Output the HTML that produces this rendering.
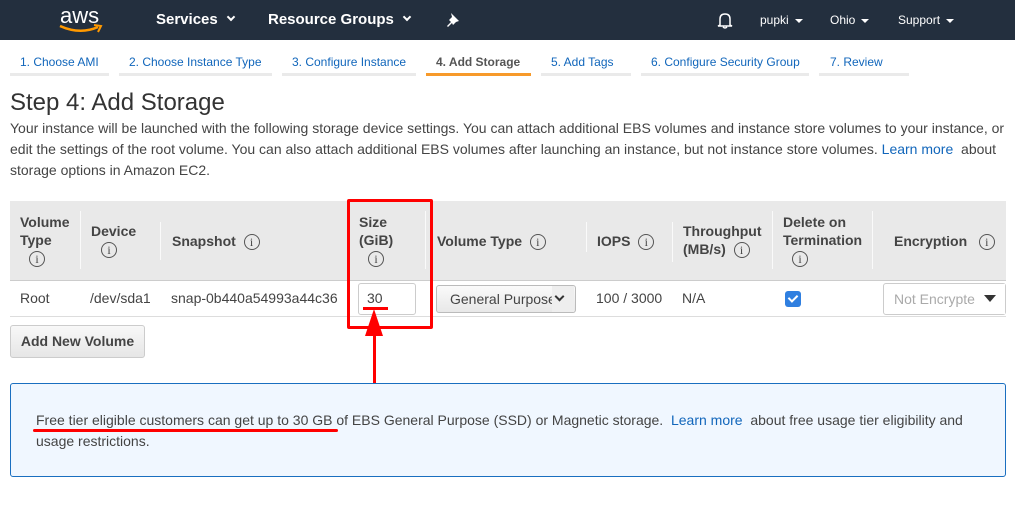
<!DOCTYPE html>
<html><head><meta charset="utf-8"><style>
*{margin:0;padding:0;box-sizing:border-box}
body{width:1015px;height:519px;overflow:hidden;background:#fff;font-family:"Liberation Sans",Arial,sans-serif;color:#444;position:relative}
.a{position:absolute;white-space:nowrap}
.nav{left:0;top:0;width:1015px;height:40px;background:#232f3e}
.nt{color:#fff;font-weight:bold;font-size:15px;top:11px}
.ns{color:#fff;font-size:12px;top:13px}
.car{display:inline-block;width:0;height:0;border-left:4px solid transparent;border-right:4px solid transparent;border-top:4px solid #fff;vertical-align:middle;margin-left:6px}
.chev{display:inline-block;width:6px;height:6px;border-right:2px solid #fff;border-bottom:2px solid #fff;transform:rotate(45deg);margin-left:10px;vertical-align:4px}
.st{font-size:12px;color:#1166bb;top:55px}
.bar{top:73px;height:3px;background:#eaeaea}
.h{font-weight:bold;font-size:14px;color:#444;line-height:18px}
.i{display:inline-block;width:16px;height:16px;border:1px solid #555;border-radius:50%;font-size:12px;line-height:14px;text-align:center;font-weight:normal;color:#444;vertical-align:middle;font-family:"Liberation Serif",serif}
.sep{top:211px;width:1px;height:58px;background:#fafafa}
.c{font-size:14px;top:290px;color:#444}
.lk{color:#1166bb}
</style></head><body>
<div class="a nav"></div>
<div class="a" style="left:60px;top:3px;color:#fff;font-size:22px">aws</div>
<svg class="a" style="left:58px;top:24px" width="46" height="10"><path d="M2 2 Q22 11 40 3" stroke="#f90" stroke-width="2.5" fill="none"/><path d="M36 1 L43 2 L40 8" stroke="#f90" stroke-width="2" fill="none"/></svg>
<div class="a nt" style="left:156px">Services<span class="chev"></span></div>
<div class="a nt" style="left:268px">Resource Groups<span class="chev"></span></div>
<svg class="a" style="left:445px;top:12px" width="16" height="16"><path d="M6 1 L14 9 L11 10 L8 13 L7 11 L3 15 L2 14 L6 10 L4 8 L7 5 Z" fill="#fff"/></svg>
<svg class="a" style="left:716px;top:11px" width="18" height="18"><path d="M4 14 L4 8 Q4 3 9 3 Q14 3 14 8 L14 14 L16 15 L2 15 Z M7 16 Q9 18 11 16" stroke="#fff" stroke-width="1.5" fill="none"/></svg>
<div class="a ns" style="left:760px">pupki<span class="car"></span></div>
<div class="a ns" style="left:830px">Ohio<span class="car"></span></div>
<div class="a ns" style="left:898px">Support<span class="car"></span></div>

<div class="a st" style="left:20px">1. Choose AMI</div><div class="a bar" style="left:10px;width:99px"></div>
<div class="a st" style="left:129px">2. Choose Instance Type</div><div class="a bar" style="left:119px;width:153px"></div>
<div class="a st" style="left:292px">3. Configure Instance</div><div class="a bar" style="left:282px;width:134px"></div>
<div class="a st" style="left:436px;color:#555;font-weight:bold">4. Add Storage</div><div class="a bar" style="left:426px;width:105px;background:#f79a2a"></div>
<div class="a st" style="left:551px">5. Add Tags</div><div class="a bar" style="left:541px;width:90px"></div>
<div class="a st" style="left:651px">6. Configure Security Group</div><div class="a bar" style="left:641px;width:168px"></div>
<div class="a st" style="left:830px">7. Review</div><div class="a bar" style="left:819px;width:90px"></div>

<div class="a" style="left:10px;top:89px;font-size:24px;color:#333">Step 4: Add Storage</div>
<div class="a" style="left:10px;top:118px;font-size:14px;line-height:21px;color:#444;white-space:normal;width:1000px">Your instance will be launched with the following storage device settings. You can attach additional EBS volumes and instance store volumes to your instance, or edit the settings of the root volume. You can also attach additional EBS volumes after launching an instance, but not instance store volumes. <span class="lk">Learn more</span>&nbsp; about storage options in Amazon EC2.</div>

<div class="a" style="left:10px;top:201px;width:996px;height:80px;background:#e9e9e9;border-bottom:1px solid #ccc"></div>
<div class="a" style="left:10px;top:316px;width:996px;height:1px;background:#ddd"></div>
<div class="a h" style="left:20px;top:213px">Volume<br>Type<br><span class="i" style="margin-left:9px">i</span></div>
<div class="a sep" style="left:80px"></div>
<div class="a h" style="left:91px;top:222px">Device<br><span class="i" style="margin-left:10px">i</span></div>
<div class="a sep" style="left:160px;top:222px;height:38px"></div>
<div class="a h" style="left:172px;top:232px">Snapshot &nbsp;<span class="i">i</span></div>
<div class="a h" style="left:359px;top:213px">Size<br>(GiB)<br><span class="i" style="margin-left:9px">i</span></div>
<div class="a sep" style="left:425px"></div>
<div class="a h" style="left:437px;top:232px">Volume Type &nbsp;<span class="i">i</span></div>
<div class="a sep" style="left:586px;top:222px;height:30px"></div>
<div class="a h" style="left:597px;top:232px">IOPS &nbsp;<span class="i">i</span></div>
<div class="a sep" style="left:672px;top:222px;height:40px"></div>
<div class="a h" style="left:683px;top:222px">Throughput<br>(MB/s) &nbsp;<span class="i">i</span></div>
<div class="a sep" style="left:772px"></div>
<div class="a h" style="left:783px;top:213px">Delete on<br>Termination<br><span class="i" style="margin-left:9px">i</span></div>
<div class="a sep" style="left:872px"></div>
<div class="a h" style="left:894px;top:232px">Encryption &nbsp;&nbsp;<span class="i">i</span></div>

<div class="a c" style="left:20px">Root</div>
<div class="a c" style="left:90px">/dev/sda1</div>
<div class="a c" style="left:171px">snap-0b440a54993a44c36</div>
<div class="a" style="left:358px;top:283px;width:58px;height:32px;border:1px solid #ccc;border-radius:3px;background:#fff"></div>
<div class="a c" style="left:367px">30</div>
<div class="a" style="left:436px;top:285px;width:140px;height:28px;border:1px solid #bbb;border-radius:3px;background:linear-gradient(#fafafa,#e8e8e8);font-size:14px;line-height:26px;padding-left:13px;overflow:hidden;color:#444">General Purpose</div>
<div class="a" style="left:552px;top:286px;width:22px;height:26px;background:#eee"></div>
<div class="a" style="left:556px;top:293px;width:7px;height:7px;border-right:2px solid #333;border-bottom:2px solid #333;transform:rotate(45deg)"></div>
<div class="a c" style="left:596px">100 / 3000</div>
<div class="a c" style="left:682px">N/A</div>
<div class="a" style="left:785px;top:291px;width:16px;height:16px;background:#2f7fe0;border-radius:3px"></div>
<div class="a" style="left:790px;top:293px;width:6px;height:9px;border-right:2px solid #fff;border-bottom:2px solid #fff;transform:rotate(45deg)"></div>
<div class="a" style="left:883px;top:283px;width:123px;height:32px;border:1px solid #ccc;border-radius:3px;background:#fff;font-size:14px;line-height:30px;padding-left:10px;color:#aaa;overflow:hidden">Not Encrypte</div>
<div class="a" style="left:975px;top:284px;width:30px;height:30px;background:#fff"></div>
<div class="a" style="left:984px;top:295px;border-left:6px solid transparent;border-right:6px solid transparent;border-top:7px solid #333"></div>

<div class="a" style="left:10px;top:325px;width:135px;height:33px;border:1px solid #ccc;border-radius:3px;background:linear-gradient(#f8f8f8,#e6e6e6);font-weight:bold;font-size:14px;line-height:31px;text-align:center;color:#444">Add New Volume</div>

<div class="a" style="left:347px;top:199px;width:86px;height:130px;border:3px solid #f00;border-radius:2px"></div>
<div class="a" style="left:363px;top:307px;width:25px;height:3px;background:#f00"></div>
<div class="a" style="left:373px;top:333px;width:3px;height:52px;background:#f00"></div>
<svg class="a" style="left:364px;top:309px" width="20" height="27"><path d="M10 0 L19 27 L1 27 Z" fill="#f00"/></svg>

<div class="a" style="left:10px;top:383px;width:996px;height:94px;border:1px solid #1a6fc0;border-radius:3px;background:#f0f7ff"></div>
<div class="a" style="left:36px;top:410px;width:960px;font-size:14px;line-height:21px;color:#444;white-space:normal">Free tier eligible customers can get up to 30 GB of EBS General Purpose (SSD) or Magnetic storage.&nbsp; <span class="lk">Learn more</span>&nbsp; about free usage tier eligibility and usage restrictions.</div>
<div class="a" style="left:33px;top:429px;width:305px;height:3px;background:#f00;border-radius:2px"></div>
</body></html>
